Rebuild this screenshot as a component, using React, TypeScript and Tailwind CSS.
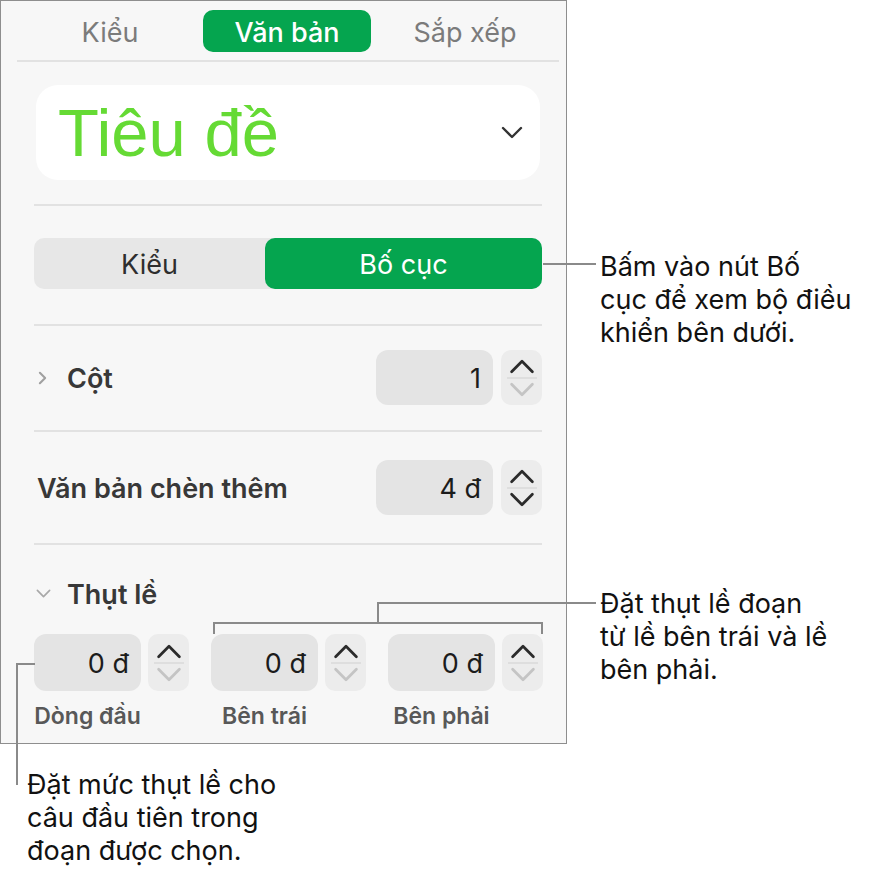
import React from 'react';

const ui = { fontFamily: 'Inter, "Noto Sans", sans-serif' };

function Chevron({ dir, className }: { dir: 'up' | 'down' | 'right'; className?: string }) {
    const pts = dir === 'up' ? '2,11 11,2 20,11' : dir === 'down' ? '2,2 11,11 20,2' : '2,2 8,8 2,14';
    const box = dir === 'right' ? '0 0 10 16' : '0 0 22 13';
    return (
        <svg viewBox={box} className={className} fill="none" stroke="currentColor" strokeWidth={2.4} strokeLinecap="round" strokeLinejoin="round">
            <polyline points={pts} />
        </svg>
    );
}

function Stepper({ downActive = false, h }: { downActive?: boolean; h: string }) {
    return (
        <div className={`w-[41px] ${h} rounded-[10px] bg-[#ececec] flex flex-col items-center justify-center`}>
            <Chevron dir="up" className="w-[26px] h-[15px] text-[#2b2b2b]" />
            <div className="w-[30px] h-[2px] bg-[#dedede] my-[3px]" />
            <Chevron dir="down" className={`w-[26px] h-[15px] ${downActive ? 'text-[#2b2b2b]' : 'text-[#c4c4c4]'}`} />
        </div>
    );
}

function NumField({ value, w, h }: { value: string; w: string; h: string }) {
    return (
        <div className={`${w} ${h} rounded-[12px] bg-[#e4e4e4] flex items-center justify-end pr-[12px] text-[27px] text-[#1c1c1c]`}>
            <span className="translate-y-[2px]">{value}</span>
        </div>
    );
}

function Separator({ className }: { className: string }) {
    return <div className={`h-[2px] bg-[#e2e2e2] ${className}`} />;
}

function IndentField({ value, label }: { value: string; label: string }) {
    return (
        <div className="flex flex-col w-[155px]">
            <div className="flex gap-[7px]">
                <NumField value={value} w="w-[107px]" h="h-[57px]" />
                <Stepper h="h-[57px]" />
            </div>
            <div className="w-[107px] mt-[12px] h-[26px] flex justify-center text-[23px] font-semibold text-[#585858] leading-[26px] whitespace-nowrap">
                {label}
            </div>
        </div>
    );
}

function Panel() {
    return (
        <div className="w-[567px] h-[744px] border-[1.5px] border-[#8e8e8e] bg-[#f7f7f7] flex flex-col">
            {/* inspector tabs */}
            <div className="ml-[16px] w-[542px] mt-[9px] h-[42px] flex items-center text-[27px]">
                <div className="w-[186px] text-center text-[#7b7b7b] translate-y-[2px]">Kiểu</div>
                <div className="w-[168px] h-[42px] rounded-[10px] bg-[#05a54f] text-white font-medium flex items-center justify-center">
                    <span className="translate-y-[2px]">Văn bản</span>
                </div>
                <div className="flex-1 text-center text-[#7b7b7b] translate-y-[2px]">Sắp xếp</div>
            </div>
            <Separator className="ml-[16px] w-[542px] mt-[8px]" />

            {/* paragraph style */}
            <div className="ml-[35px] w-[504px] h-[95px] mt-[23px] rounded-[22px] bg-white flex items-center justify-between pl-[22px] pr-[17px]">
                <span className="text-[67px] leading-none text-[#65da34]" style={{ fontFamily: '"Liberation Sans", Arial, sans-serif' }}>
                    Tiêu đề
                </span>
                <Chevron dir="down" className="w-[22px] h-[13px] text-[#333]" />
            </div>
            <Separator className="ml-[33px] w-[508px] mt-[24px]" />

            {/* segmented control */}
            <div className="ml-[33px] w-[508px] h-[51px] mt-[32px] rounded-[10px] bg-[#e7e7e7] flex text-[27px]">
                <div className="flex-1 flex items-center justify-center text-[#2e2e2e]">
                    <span className="translate-y-[2px]">Kiểu</span>
                </div>
                <div className="w-[277px] rounded-[10px] bg-[#05a54f] text-white flex items-center justify-center">
                    <span className="translate-y-[2px]">Bố cục</span>
                </div>
            </div>
            <Separator className="ml-[33px] w-[508px] mt-[35px]" />

            {/* columns */}
            <div className="ml-[33px] w-[508px] mt-[24px] h-[55px] flex items-center">
                <Chevron dir="right" className="w-[9px] h-[14px] ml-[4px] text-[#a0a0a0]" />
                <span className="ml-[20px] text-[27px] font-semibold text-[#383838] translate-y-[2px]">Cột</span>
                <div className="ml-auto flex gap-[8px]">
                    <NumField value="1" w="w-[117px]" h="h-[55px]" />
                    <Stepper h="h-[55px]" />
                </div>
            </div>
            <Separator className="ml-[33px] w-[508px] mt-[25px]" />

            {/* text inset */}
            <div className="ml-[33px] w-[508px] mt-[28px] h-[55px] flex items-center">
                <span className="ml-[3px] text-[27px] font-semibold text-[#383838] translate-y-[2px]">Văn bản chèn thêm</span>
                <div className="ml-auto flex gap-[8px]">
                    <NumField value="4 đ" w="w-[117px]" h="h-[55px]" />
                    <Stepper h="h-[55px]" downActive />
                </div>
            </div>
            <Separator className="ml-[33px] w-[508px] mt-[28px]" />

            {/* indents */}
            <div className="ml-[33px] mt-[33px] h-[30px] flex items-center">
                <Chevron dir="down" className="w-[15px] h-[9px] ml-[2px] text-[#a8a8a8]" />
                <span className="ml-[16px] text-[27px] font-semibold text-[#383838] translate-y-[2px]">Thụt lề</span>
            </div>
            <div className="ml-[33px] w-[508px] mt-[26px] flex gap-[22px]">
                <IndentField value="0 đ" label="Dòng đầu" />
                <IndentField value="0 đ" label="Bên trái" />
                <IndentField value="0 đ" label="Bên phải" />
            </div>
        </div>
    );
}

export default function App() {
    return (
        <div className="relative w-[876px] h-[873px] bg-white overflow-hidden" style={ui}>
            <Panel />

            {/* callout: layout button */}
            <div className="absolute left-[543px] top-[263px] w-[53px] h-[2px] bg-[#8a8a8a]" />
            <p className="absolute left-[600px] top-[250px] text-[27px] leading-[33px] text-[#111]">
                Bấm vào nút Bố<br />cục để xem bộ điều<br />khiển bên dưới.
            </p>

            {/* callout: left and right indents */}
            <div className="absolute left-[213px] top-[622px] w-[330px] h-[2px] bg-[#8a8a8a]" />
            <div className="absolute left-[213px] top-[622px] w-[2px] h-[12px] bg-[#8a8a8a]" />
            <div className="absolute left-[541px] top-[622px] w-[2px] h-[12px] bg-[#8a8a8a]" />
            <div className="absolute left-[377px] top-[602px] w-[2px] h-[21px] bg-[#8a8a8a]" />
            <div className="absolute left-[377px] top-[602px] w-[219px] h-[2px] bg-[#8a8a8a]" />
            <p className="absolute left-[600px] top-[587px] text-[27px] leading-[33px] text-[#111]">
                Đặt thụt lề đoạn<br />từ lề bên trái và lề<br />bên phải.
            </p>

            {/* callout: first line */}
            <div className="absolute left-[16px] top-[663px] w-[19px] h-[2px] bg-[#8a8a8a]" />
            <div className="absolute left-[16px] top-[663px] w-[2px] h-[122px] bg-[#8a8a8a]" />
            <p className="absolute left-[27px] top-[768px] text-[27px] leading-[33px] text-[#111]">
                Đặt mức thụt lề cho<br />câu đầu tiên trong<br />đoạn được chọn.
            </p>
        </div>
    );
}
